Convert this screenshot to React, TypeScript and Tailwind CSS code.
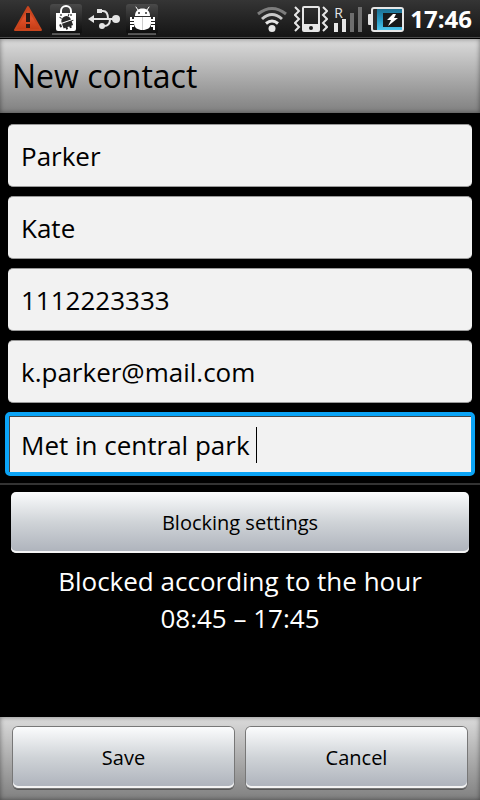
import { useState } from "react";
import { clsx } from "clsx";

const WarningIcon = () => (
  <svg width="30" height="28" viewBox="0 0 30 28" aria-hidden="true">
    <defs>
      <linearGradient id="warn" x1="0" y1="0" x2="0" y2="1">
        <stop offset="0" stopColor="#b9492a" />
        <stop offset="0.5" stopColor="#e0502a" />
        <stop offset="1" stopColor="#c23c14" />
      </linearGradient>
    </defs>
    <path d="M14 2 L27 25 H1 Z" fill="url(#warn)" stroke="#c8451e" strokeWidth="2" strokeLinejoin="round" />
    <path d="M12 8h4v9h-4zM12 19h4v4h-4z" fill="#2a1b17" />
  </svg>
);

const MarketIcon = () => (
  <svg width="32" height="32" viewBox="0 0 32 32" aria-hidden="true">
    <defs>
      <linearGradient id="tile" x1="0" y1="0" x2="0" y2="1">
        <stop offset="0" stopColor="#4a4a4a" />
        <stop offset="0.6" stopColor="#222222" />
        <stop offset="1" stopColor="#0c0c0c" />
      </linearGradient>
    </defs>
    <rect y="1" width="32" height="30" rx="3" fill="url(#tile)" />
    <path d="M2 31h28" stroke="#999" />
    <path d="M11 11V8a5 5 0 0 1 10 0v3" fill="none" stroke="#fff" strokeWidth="2" />
    <path d="M6 10h20v16a2 2 0 0 1-2 2H8a2 2 0 0 1-2-2z" fill="#fff" />
    <circle cx="11" cy="12" r="1" fill="#555" />
    <circle cx="21" cy="12" r="1" fill="#555" />
    <g transform="rotate(-20 17 20)" fill="#2a2a2a">
      <path d="M12 18a5 5 0 0 1 10 0zM12 19h12v1h-2v4h-2v2h-2v-2h-2v2h-2v-2h-2zM9 19h2v3H9z" />
      <path d="M13.500 14l-1.500-2M20.500 14l1.500-2" stroke="#2a2a2a" />
    </g>
  </svg>
);

const UsbIcon = () => (
  <svg width="32" height="24" viewBox="0 0 32 24" fill="none" stroke="#e4e4e4" strokeWidth="2" aria-hidden="true">
    <path d="M6 12h22M12 4h3c4 0 5 3 5 8M14 19h2c4 0 6-3 6-7" />
    <path d="M0 12l6-4v8z" fill="#e4e4e4" stroke="none" />
    <path d="M9 2h5v4H9z" fill="#e4e4e4" stroke="none" />
    <circle cx="14" cy="19" r="3" fill="#e4e4e4" stroke="none" />
    <circle cx="28" cy="12" r="4" fill="#e4e4e4" stroke="none" />
  </svg>
);

const DebugIcon = () => (
  <svg width="32" height="32" viewBox="0 0 32 32" aria-hidden="true">
    <rect y="1" width="32" height="30" rx="3" fill="url(#tile)" />
    <path d="M2 31h28" stroke="#999" />
    <path d="M12 7L10 4M21 7l2-3" stroke="#fff" strokeLinecap="round" />
    <path d="M9 13c0-5 3-7.500 7.500-7.500S24 8 24 13z" fill="#fff" />
    <path d="M8 14h17v6c0 5-4 7-8.500 7S8 25 8 20z" fill="#fff" />
    <path d="M16.500 14v13" stroke="#ccc" />
    <path
      d="M4 14h2v2h2v2H4zM4 19h4v2H4zM4 22h4v2H6v3H4zM29 14h-2v2h-2v2h4zM29 19h-4v2h4zM29 22h-4v2h2v3h2z"
      fill="#fff"
    />
    <circle cx="13" cy="10" r="1" fill="#333" />
    <circle cx="20" cy="10" r="1" fill="#333" />
  </svg>
);

const WifiIcon = () => (
  <svg width="32" height="28" viewBox="0 0 32 28" fill="none" strokeWidth="3" aria-hidden="true">
    <path d="M2 9q14-11 28 0" stroke="#7d7d7d" />
    <path d="M6 14q10-9 20 0" stroke="#c9c9c9" />
    <path d="M10 18.500q6-5 12 0" stroke="#e6e6e6" />
    <circle cx="16" cy="23.500" r="3.500" fill="#e6e6e6" />
  </svg>
);

const VibrateIcon = () => (
  <svg width="34" height="28" viewBox="0 0 34 28" aria-hidden="true">
    <path
      fillRule="evenodd"
      d="M10 1h14a2 2 0 0 1 2 2v22a2 2 0 0 1-2 2H10a2 2 0 0 1-2-2V3a2 2 0 0 1 2-2zM10 3v16h14V3zM17 21a2 2 0 1 0 0 4 2 2 0 0 0 0-4z"
      fill="#e6e6e6"
    />
    <path
      d="M1 2l4 4-4 4 4 4-4 4 4 4-4 4M29 2l4 4-4 4 4 4-4 4 4 4-4 4"
      fill="none"
      stroke="#e6e6e6"
      strokeWidth="2"
    />
  </svg>
);

const SignalIcon = () => (
  <div className="relative h-7 w-7">
    <svg width="28" height="28" viewBox="0 0 28 28" aria-hidden="true">
      <path d="M0 18h4v9H0zM8 14h4v13H8z" fill="#e6e6e6" />
      <path d="M16 8h4v19h-4zM24 2h4v25h-4z" fill="#6e6e6e" />
    </svg>
    <span className="absolute top-0 left-0 text-sm leading-4 text-[#e6e6e6]">R</span>
  </div>
);

const BatteryIcon = () => (
  <svg width="36" height="26" viewBox="0 0 36 26" aria-hidden="true">
    <defs>
      <linearGradient id="charge" x1="0" y1="0" x2="0" y2="1">
        <stop offset="0" stopColor="#1d6f91" />
        <stop offset="0.5" stopColor="#2596c0" />
        <stop offset="1" stopColor="#4cc4ec" />
      </linearGradient>
    </defs>
    <rect y="8" width="4" height="11" rx="1" fill="#e6e6e6" />
    <rect x="4" y="2" width="31" height="23" rx="2" fill="#2c2c2c" stroke="#e6e6e6" strokeWidth="2" />
    <rect x="9" y="3" width="25" height="21" fill="url(#charge)" />
    <path d="M15 7h19v14H15z" fill="#17191b" />
    <path d="M25 8h3l-2 4h4l-10 8 3-6h-4z" fill="#fff" />
  </svg>
);

const StatusBar = () => {
  return (
    <div className="flex h-[39px] items-center justify-between border-b border-black bg-linear-to-b from-[#353535] to-[#141414] pr-2 pl-3.5 inset-shadow-[0_-1px_0_#4a4a4a]">
      {/* LEFT */}
      <div className="flex items-center gap-1.5">
        <WarningIcon />
        <MarketIcon />
        <UsbIcon />
        <DebugIcon />
      </div>
      {/* RIGHT */}
      <div className="flex items-center gap-1.5">
        <WifiIcon />
        <VibrateIcon />
        <SignalIcon />
        <BatteryIcon />
        <span className="text-2xl leading-8 font-bold text-white">17:46</span>
      </div>
    </div>
  );
};

const fields = [
  { id: "lastName", label: "Last name", type: "text", value: "Parker" },
  { id: "firstName", label: "First name", type: "text", value: "Kate" },
  { id: "phone", label: "Phone", type: "tel", value: "1112223333" },
  { id: "email", label: "Email", type: "email", value: "k.parker@mail.com" },
  { id: "note", label: "Note", type: "text", value: "Met in central park " },
];

const Button = ({ children, className }: { children: string; className?: string }) => (
  <button
    type="button"
    className={clsx(
      "h-[61px] rounded-[5px] bg-linear-to-b from-[#fbfcfd] via-[#cfd3d7] via-50% to-[#adb2bb] text-xl leading-8 text-black inset-shadow-[0_-2px_0_#f4f4f4]",
      className,
    )}
  >
    {children}
  </button>
);

export default function App() {
  const [active, setActive] = useState("note");

  return (
    <div className="flex min-h-screen flex-col bg-black font-['Open_Sans',sans-serif]">
      <StatusBar />
      <header className="bg-linear-to-b from-[#dcdcdc] to-[#808080] px-3 py-4 inset-shadow-[0_0_5px_#00000070]">
        <h1 className="text-[32px] leading-[42px] text-black">New contact</h1>
      </header>
      <main className="flex-1">
        <div className="flex flex-col gap-2 px-[5px] pt-[11px] pb-[7px]">
          {fields.map((field) => (
            <div
              key={field.id}
              className={clsx(
                "rounded-[5px] border-4",
                active === field.id ? "border-[#0ba4f6]" : "border-transparent",
              )}
            >
              <div
                className={clsx(
                  "flex items-center bg-[#f2f2f2]",
                  active === field.id
                    ? "h-14 border-t border-l border-[#444] pl-[11px]"
                    : "-mx-px -mt-1 -mb-[3px] h-[63px] rounded-[5px] border-y border-[#999] px-[13px]",
                )}
              >
                <input
                  id={field.id}
                  aria-label={field.label}
                  type={field.type}
                  defaultValue={field.value}
                  onFocus={() => setActive(field.id)}
                  className={clsx(
                    "h-10 bg-transparent text-[26px] leading-10 text-black caret-transparent outline-none",
                    active === field.id ? "field-sizing-content" : "w-full",
                  )}
                />
                {active === field.id && <span className="h-9 w-px bg-black" />}
              </div>
            </div>
          ))}
        </div>
        <hr className="border-t-2 border-[#333]" />
        <div className="flex flex-col px-[11px] pt-[7px]">
          <Button>Blocking settings</Button>
          <p className="pt-[10px] text-center text-[26px] leading-[37px] text-white">
            Blocked according to the hour
            <br />
            08:45 – 17:45
          </p>
        </div>
      </main>
      <footer className="flex gap-3 bg-linear-to-b from-[#dcdcdc] to-[#808080] px-[13px] pt-[10px] pb-3 inset-shadow-[0_0_5px_#00000070]">
        <Button className="flex-1 shadow-[0_0_0_1px_#777,0_2px_0_#555]">Save</Button>
        <Button className="flex-1 shadow-[0_0_0_1px_#777,0_2px_0_#555]">Cancel</Button>
      </footer>
    </div>
  );
}
